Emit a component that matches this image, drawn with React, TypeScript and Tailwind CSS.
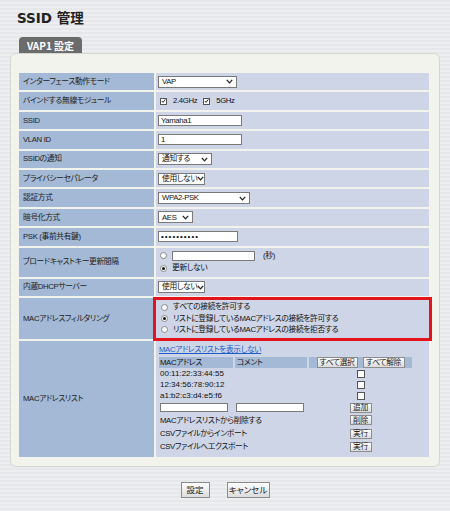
import React from 'react';

const jp = "font-['Liberation_Sans','Noto_Sans_CJK_JP',sans-serif] [font-feature-settings:'palt']";
const jpNoto = "font-['Noto_Sans_CJK_JP','Liberation_Sans',sans-serif] [font-feature-settings:'palt']";

const Chevron = () => (
  <svg width="7" height="5" viewBox="0 0 7 5" className="shrink-0">
    <path d="M0.8 0.9 L3.5 3.9 L6.2 0.9" fill="none" stroke="#222" strokeWidth="1.3" />
  </svg>
);

const Select = ({ value, className }: { value: string; className: string }) => (
  <div
    className={`flex h-[12px] items-center justify-between overflow-hidden whitespace-nowrap border border-[#7a7a7a] bg-white pl-[3px] pr-[3px] leading-none text-[#111] ${className}`}
  >
    <span>{value}</span>
    <Chevron />
  </div>
);

const Check = ({ size = 'h-[7px] w-[7px]', checked = false }: { size?: string; checked?: boolean }) => (
  <span className={`flex shrink-0 items-center justify-center border border-[#555] bg-white ${size}`}>
    {checked && (
      <svg width="6" height="6" viewBox="0 0 6 6">
        <path d="M0.9 3 L2.4 4.6 L5.2 1.2" fill="none" stroke="#111" strokeWidth="1.1" />
      </svg>
    )}
  </span>
);

const Radio = ({ checked = false }: { checked?: boolean }) => (
  <span className="flex h-[7px] w-[7px] shrink-0 items-center justify-center rounded-full border border-[#888] bg-white">
    {checked && <span className="h-[3px] w-[3px] rounded-full bg-[#111]" />}
  </span>
);

const Btn = ({ children, className }: { children: React.ReactNode; className: string }) => (
  <button
    type="button"
    className={`flex items-center justify-center whitespace-nowrap border border-[#8c8c8c] bg-[linear-gradient(#fdfdfd,#dcdcdc)] leading-none text-[#222] ${className}`}
  >
    {children}
  </button>
);

const Row = ({ label, h, children }: { label: string; h: string; children?: React.ReactNode }) => (
  <div className={`grid grid-cols-[135px_273px] gap-x-[2px] ${h}`}>
    <div className="flex items-center bg-[#a3b9d6] pl-[4px] text-[#222]">{label}</div>
    <div className="relative flex items-center bg-[#cdd5e7] pl-[2px] text-[#111]">{children}</div>
  </div>
);

const macs = ['00:11:22:33:44:55', '12:34:56:78:90:12', 'a1:b2:c3:d4:e5:f6'];

const App = () => {
  return (
    <div className="min-h-[511px] w-full bg-[repeating-linear-gradient(180deg,#e5e7ea_0px,#e5e7ea_2px,#eceef0_2px,#eceef0_4px)] pt-[9px]">
      <h1 className="ml-[17px] h-[18px] font-['DejaVu_Sans','Noto_Sans_CJK_JP',sans-serif] text-[13.5px] font-bold leading-[18px] text-[#222]">
        SSID 管理
      </h1>
      <div
        className={`ml-[19px] mt-[10px] flex h-[16px] w-[63px] items-center justify-center rounded-t-[4px] bg-[#6b6b6b] text-[10px] font-bold text-white ${jpNoto}`}
      >
        VAP1 設定
      </div>

      {/* panel */}
      <div
        className={`mx-[10px] rounded-[6px] border border-[#d6d6d0] bg-[#f3f3ee] pb-[9px] pl-[8px] pr-[10px] pt-[19px] text-[7.75px] tracking-[-0.35px] ${jp}`}
      >
        <div className="flex flex-col gap-y-[2px]">
          <Row label="インターフェース動作モード" h="h-[17.4px]">
            <Select value="VAP" className="w-[79px]" />
          </Row>
          <Row label="バインドする無線モジュール" h="h-[17.4px]">
            <div className="flex items-center pl-[2px]">
              <Check checked />
              <span className="ml-[6px]">2.4GHz</span>
              <span className="ml-[6px]">
                <Check checked />
              </span>
              <span className="ml-[6px]">5GHz</span>
            </div>
          </Row>
          <Row label="SSID" h="h-[17.4px]">
            <input
              readOnly
              defaultValue="Yamaha1"
              className="h-[11px] w-[84px] border border-[#7a7a7a] bg-white px-[2px] leading-none outline-none"
            />
          </Row>
          <Row label="VLAN ID" h="h-[17.4px]">
            <input
              readOnly
              defaultValue="1"
              className="h-[11px] w-[84px] border border-[#7a7a7a] bg-white px-[2px] leading-none outline-none"
            />
          </Row>
          <Row label="SSIDの通知" h="h-[17.4px]">
            <Select value="通知する" className="w-[54px]" />
          </Row>
          <Row label="プライバシーセパレータ" h="h-[17.4px]">
            <Select value="使用しない" className="w-[47px]" />
          </Row>
          <Row label="認証方式" h="h-[17.4px]">
            <Select value="WPA2-PSK" className="w-[92px]" />
          </Row>
          <Row label="暗号化方式" h="h-[17.4px]">
            <Select value="AES" className="w-[35px]" />
          </Row>
          <Row label="PSK (事前共有鍵)" h="h-[17.4px]">
            <input
              readOnly
              type="password"
              defaultValue="abcdefghij"
              className="h-[11px] w-[80px] border border-[#7a7a7a] bg-white px-[2px] text-[8px] leading-none tracking-[1px] outline-none"
            />
          </Row>
          <Row label="ブロードキャストキー更新間隔" h="h-[29px]">
            <div className="flex flex-col pl-[2px]">
              <div className="flex h-[12.5px] items-center">
                <Radio />
                <span className="ml-[5px] h-[10px] w-[83px] border border-[#7a7a7a] bg-white" />
                <span className="ml-[8px]">(秒)</span>
              </div>
              <div className="flex h-[12.5px] items-center">
                <Radio checked />
                <span className="ml-[5px]">更新しない</span>
              </div>
            </div>
          </Row>
          <Row label="内蔵DHCPサーバー" h="h-[17.4px]">
            <Select value="使用しない" className="w-[47px]" />
          </Row>
          <Row label="MACアドレスフィルタリング" h="h-[41px]">
            <div className="flex flex-col pl-[3px]">
              <div className="flex h-[11.2px] items-center">
                <Radio />
                <span className="ml-[5px]">すべての接続を許可する</span>
              </div>
              <div className="flex h-[11.2px] items-center">
                <Radio checked />
                <span className="ml-[5px]">リストに登録しているMACアドレスの接続を許可する</span>
              </div>
              <div className="flex h-[11.2px] items-center">
                <Radio />
                <span className="ml-[5px]">リストに登録しているMACアドレスの接続を拒否する</span>
              </div>
            </div>
            <div className="pointer-events-none absolute -bottom-[2px] -left-[3px] -right-[3px] -top-[1px] border-[3px] border-[#e3141c]" />
          </Row>
          <Row label="MACアドレスリスト" h="h-[116px]">
            <div className="flex h-full flex-col self-start pl-[1px] pt-[3px]">
              <a className="h-[11px] leading-[11px] text-[#1a5cc8] underline" href="#">
                MACアドレスリストを表示しない
              </a>
              <div className="mt-[2px] grid grid-cols-[74px_72px_103px] gap-x-[2px]">
                <div className="flex h-[11px] items-center bg-[#a3b9d6] pl-[1px]">MACアドレス</div>
                <div className="flex h-[11px] items-center bg-[#a3b9d6] pl-[2px]">コメント</div>
                <div className="flex h-[11px] items-center justify-center gap-[5px] bg-[#a3b9d6]">
                  <Btn className="h-[11px] w-[41px]">すべて選択</Btn>
                  <Btn className="h-[11px] w-[42px]">すべて解除</Btn>
                </div>

                {macs.map((mac) => (
                  <React.Fragment key={mac}>
                    <div className="flex h-[11.3px] items-center pl-[1px] text-[8px] tracking-normal">{mac}</div>
                    <div />
                    <div className="flex h-[11.3px] items-center justify-center">
                      <Check size="h-[8px] w-[8px]" />
                    </div>
                  </React.Fragment>
                ))}

                <div className="flex h-[12px] items-center pl-[1px]">
                  <span className="h-[9px] w-[68px] border border-[#7a7a7a] bg-white" />
                </div>
                <div className="flex h-[12px] items-center pl-[1px]">
                  <span className="h-[9px] w-[68px] border border-[#7a7a7a] bg-white" />
                </div>
                <div className="flex h-[12px] items-center justify-center">
                  <Btn className="h-[10px] w-[22px]">追加</Btn>
                </div>

                <div className="col-span-2 flex h-[13.3px] items-center pl-[1px]">MACアドレスリストから削除する</div>
                <div className="flex h-[13.3px] items-center justify-center">
                  <Btn className="h-[10px] w-[22px]">削除</Btn>
                </div>
                <div className="col-span-2 flex h-[13.3px] items-center pl-[1px]">CSVファイルからインポート</div>
                <div className="flex h-[13.3px] items-center justify-center">
                  <Btn className="h-[10px] w-[22px]">実行</Btn>
                </div>
                <div className="col-span-2 flex h-[13.3px] items-center pl-[1px]">CSVファイルへエクスポート</div>
                <div className="flex h-[13.3px] items-center justify-center">
                  <Btn className="h-[10px] w-[22px]">実行</Btn>
                </div>
              </div>
            </div>
          </Row>
        </div>
      </div>

      <div className={`mt-[15px] flex justify-center gap-[17px] text-[8.5px] ${jp}`}>
        <Btn className="h-[16px] w-[29px]">設定</Btn>
        <Btn className="h-[16px] w-[43px]">キャンセル</Btn>
      </div>
    </div>
  );
};

export default App;
